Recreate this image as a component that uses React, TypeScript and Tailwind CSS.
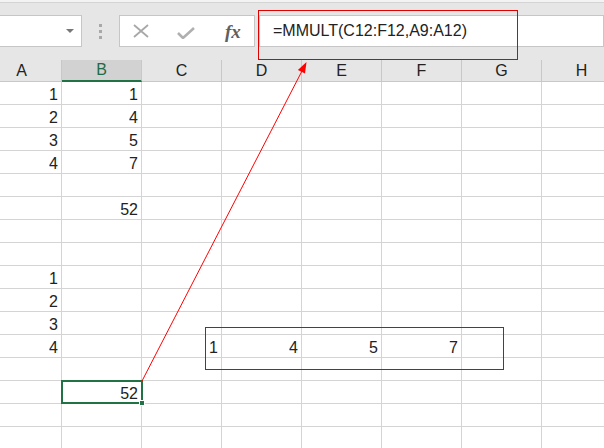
import React from 'react';

const columns = ['A', 'B', 'C', 'D', 'E', 'F', 'G', 'H'];

// cell values by row, keyed by column letter
const rows: Record<string, string>[] = [
  { A: '1', B: '1' },
  { A: '2', B: '4' },
  { A: '3', B: '5' },
  { A: '4', B: '7' },
  {},
  { B: '52' },
  {},
  {},
  { A: '1' },
  { A: '2' },
  { A: '3' },
  { A: '4', C: '1', D: '4', E: '5', F: '7' },
  {},
  { B: '52' },
  {},
  {},
];

const Toolbar = () => (
  <div className="h-[60px] bg-[#e6e6e6]">
    <div className="h-[2px] bg-[#f3f3f3]" />
    <div className="h-px bg-[#d4d4d4]" />
    <div className="flex pt-[12px]">
      <div className="relative -ml-[2px] h-[32px] w-[84px] border border-[#c6c6c6] bg-white">
        <div className="absolute right-[7px] top-[13px] h-0 w-0 border-x-[4px] border-t-[4px] border-x-transparent border-t-[#777777]" />
      </div>
      <div className="flex w-[37px] flex-col items-center justify-center gap-[3px]">
        <div className="h-[3px] w-[3px] bg-[#a8a8a8]" />
        <div className="h-[3px] w-[3px] bg-[#a8a8a8]" />
        <div className="h-[3px] w-[3px] bg-[#a8a8a8]" />
      </div>
      <div className="flex h-[32px] w-[136px] items-center border border-[#c6c6c6] bg-white">
        <svg width="16" height="14" viewBox="0 0 16 14" className="ml-[13px]">
          <path d="M1 1 L15 13 M15 1 L1 13" stroke="#a8a8a8" strokeWidth="1.8" fill="none" />
        </svg>
        <svg width="18" height="12" viewBox="0 0 18 12" className="ml-[28px] mt-[4px]">
          <path d="M1 6 L6 11 L17 1" stroke="#b0b0b0" strokeWidth="2.6" fill="none" />
        </svg>
        <span className="ml-[30px] font-['Liberation_Serif'] text-[19px] font-bold italic leading-none text-[#606060]">
          fx
        </span>
      </div>
      <div className="ml-[4px] flex h-[32px] flex-1 items-center border border-[#c6c6c6] bg-white pl-[13px] text-[16px] text-[#222222]">
        =MMULT(C12:F12,A9:A12)
      </div>
    </div>
  </div>
);

const HeaderRow = () => (
  <div className="-ml-[18px] flex h-[22px]">
    {columns.map((col) => (
      <div
        key={col}
        className={
          col === 'B'
            ? 'flex w-[80px] shrink-0 items-center justify-center border-b-2 border-r border-b-[#217346] border-r-[#c8c8c8] bg-[#d2d2d2] text-[16px] text-[#1f6b47]'
            : 'flex w-[80px] shrink-0 items-center justify-center border-b border-r border-[#c8c8c8] bg-[#e6e6e6] text-[16px] text-[#222222]'
        }
      >
        {col}
      </div>
    ))}
  </div>
);

const Sheet = () => (
  <div className="-ml-[18px]">
    {rows.map((row, i) => (
      <div key={i} className="flex h-[23px]">
        {columns.map((col) => (
          <div
            key={col}
            className="flex w-[80px] shrink-0 items-end justify-end border-b border-r border-[#d4d4d4] pr-[3px] text-[16px] leading-[19px] text-[#222222]"
          >
            {row[col] ?? ''}
          </div>
        ))}
      </div>
    ))}
  </div>
);

export default function App() {
  return (
    <div className="relative h-[448px] w-[604px] overflow-hidden bg-white font-['Liberation_Sans',sans-serif]">
      <Toolbar />
      <HeaderRow />
      <Sheet />

      {/* selected cell B14 */}
      <div className="absolute left-[61px] top-[380px] h-[24px] w-[82px] border-2 border-[#217346]" />
      <div className="absolute left-[139px] top-[400px] h-[6px] w-[6px] border border-white bg-[#217346]" />

      {/* annotations */}
      <div className="absolute left-[258px] top-[10px] h-[50px] w-[260px] border border-[#e00000]" />
      <div className="absolute left-[205px] top-[327px] h-[43px] w-[299px] border border-[#e00000]" />
      <svg className="absolute left-0 top-0" width="604" height="448" viewBox="0 0 604 448">
        <line x1="142" y1="381" x2="302.5" y2="70" stroke="#ff0000" strokeWidth="1" />
        <polygon points="306.5,62 305,73.6 297.9,70" fill="#ff0000" />
      </svg>
    </div>
  );
}
